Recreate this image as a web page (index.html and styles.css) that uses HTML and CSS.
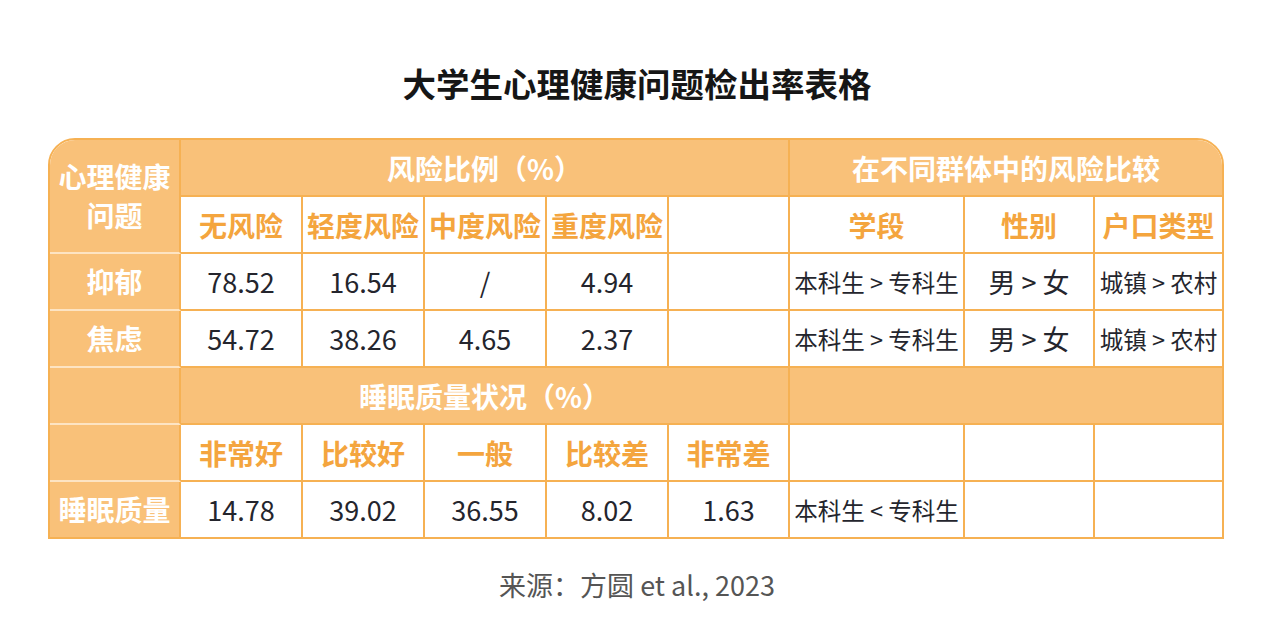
FILE: index.html
```html
<!DOCTYPE html>
<html lang="zh-CN">
<head>
<meta charset="utf-8">
<title>大学生心理健康问题检出率表格</title>
<link rel="stylesheet" href="styles.css">
</head>
<body>
<main class="page">
  <h1 class="title">大学生心理健康问题检出率表格</h1>
  <div class="frame">
    <table class="grid">
      <colgroup>
        <col class="c1"><col class="c2"><col class="c2"><col class="c2"><col class="c2"><col class="c6"><col class="c7"><col class="c8"><col class="c9">
      </colgroup>
      <tbody>
        <tr>
          <td class="side" rowspan="2">心理健康<br>问题</td>
          <td class="band" colspan="5">风险比例（%）</td>
          <td class="band last" colspan="3">在不同群体中的风险比较</td>
        </tr>
        <tr>
          <td class="head">无风险</td>
          <td class="head">轻度风险</td>
          <td class="head">中度风险</td>
          <td class="head">重度风险</td>
          <td class="head"></td>
          <td class="head">学段</td>
          <td class="head">性别</td>
          <td class="head last">户口类型</td>
        </tr>
        <tr>
          <td class="side">抑郁</td>
          <td class="num">78.52</td>
          <td class="num">16.54</td>
          <td class="num">/</td>
          <td class="num">4.94</td>
          <td class="num"></td>
          <td class="cmp">本科生 &gt; 专科生</td>
          <td class="num">男 &gt; 女</td>
          <td class="cmp last">城镇 &gt; 农村</td>
        </tr>
        <tr>
          <td class="side">焦虑</td>
          <td class="num">54.72</td>
          <td class="num">38.26</td>
          <td class="num">4.65</td>
          <td class="num">2.37</td>
          <td class="num"></td>
          <td class="cmp">本科生 &gt; 专科生</td>
          <td class="num">男 &gt; 女</td>
          <td class="cmp last">城镇 &gt; 农村</td>
        </tr>
        <tr>
          <td class="side"></td>
          <td class="band" colspan="5">睡眠质量状况（%）</td>
          <td class="band last" colspan="3"></td>
        </tr>
        <tr>
          <td class="side"></td>
          <td class="head">非常好</td>
          <td class="head">比较好</td>
          <td class="head">一般</td>
          <td class="head">比较差</td>
          <td class="head">非常差</td>
          <td class="head"></td>
          <td class="head"></td>
          <td class="head last"></td>
        </tr>
        <tr class="end">
          <td class="side">睡眠质量</td>
          <td class="num">14.78</td>
          <td class="num">39.02</td>
          <td class="num">36.55</td>
          <td class="num">8.02</td>
          <td class="num">1.63</td>
          <td class="cmp">本科生 &lt; 专科生</td>
          <td class="num"></td>
          <td class="num last"></td>
        </tr>
      </tbody>
    </table>
  </div>
  <p class="source">来源：方圆 et al., 2023</p>
</main>
</body>
</html>
```

FILE: styles.css
```css
* { box-sizing: border-box; }

html, body {
  margin: 0;
  padding: 0;
  background: #ffffff;
}

body {
  font-family: "Noto Sans CJK SC", "Noto Sans", sans-serif;
  color: #24252d;
}

.page {
  width: 1280px;
  padding-top: 63px;
  display: flex;
  flex-direction: column;
  align-items: center;
}

.title {
  margin: 0 0 35px 0;
  font-size: 33.5px;
  line-height: 40px;
  font-weight: 700;
  color: #161616;
  letter-spacing: 0;
  transform: translateX(-3px);
}

.frame {
  width: 1176px;
  border: 2px solid #f6b153;
  border-radius: 27px 27px 0 0;
  overflow: hidden;
  margin-left: -8px;
}

.grid {
  width: 1172px;
  table-layout: fixed;
  border-collapse: separate;
  border-spacing: 0;
}

.c1 { width: 131px; }
.c2 { width: 122px; }
.c6 { width: 121px; }
.c7 { width: 175px; }
.c8 { width: 130px; }
.c9 { width: 127px; }

.grid td {
  height: 57px;
  padding: 0;
  text-align: center;
  vertical-align: middle;
  border-right: 2px solid #f6b153;
  border-bottom: 2px solid #f6b153;
  white-space: nowrap;
  overflow: hidden;
}

.grid td.last { border-right: none; }
.grid tr.end td { border-bottom: none; height: 55px; }

.side {
  background: #f9c179;
  color: #ffffff;
  font-size: 28px;
  font-weight: 700;
  line-height: 39px;
}

.grid td.side { border-bottom-color: #fde4c3; }

.band {
  background: #f9c179;
  color: #ffffff;
  font-size: 28px;
  font-weight: 700;
}

.head {
  background: #ffffff;
  color: #f4a53e;
  font-size: 28px;
  font-weight: 700;
}

.num {
  background: #ffffff;
  font-size: 27px;
  font-weight: 400;
  color: #24252d;
}

.cmp {
  background: #ffffff;
  font-size: 23.5px;
  font-weight: 400;
  color: #24252d;
}

.source {
  margin: 28px 0 0 0;
  font-size: 27px;
  line-height: 36px;
  color: #555555;
  transform: translateX(-3px);
}
```
